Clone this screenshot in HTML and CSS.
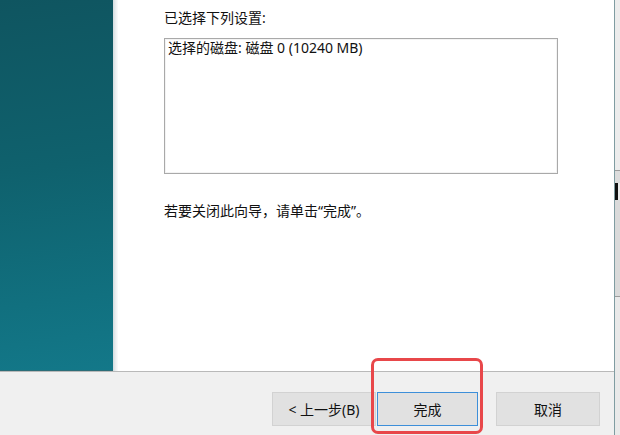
FILE: index.html
```html
<!DOCTYPE html>
<html lang="zh-CN">
<head>
<meta charset="utf-8">
<title>向导</title>
<link rel="stylesheet" href="styles.css">
</head>
<body>
<div class="screen">
  <div class="window">
    <div class="main">
      <div class="sidebar"></div>
      <div class="sidebar-edge"></div>
      <div class="content">
        <div class="label">已选择下列设置:</div>
        <div class="listbox">选择的磁盘: 磁盘 0 (10240 MB)</div>
        <div class="note">若要关闭此向导，请单击“完成”。</div>
      </div>
    </div>
    <div class="footer">
      <div class="btn-pair">
        <button class="btn">&lt; 上一步(B)</button>
        <button class="btn btn-default">完成</button>
      </div>
      <button class="btn">取消</button>
    </div>
  </div>
  <div class="edge"></div>
  <div class="behind">
    <div class="bh-top"></div>
    <div class="bh-line"></div>
    <div class="bh-gap"></div>
    <div class="bh-mark"></div>
    <div class="bh-mid"></div>
    <div class="bh-line"></div>
    <div class="bh-bottom"></div>
  </div>
  <div class="highlight"></div>
</div>
</body>
</html>
```
FILE: styles.css
```css
* { box-sizing: border-box; }
html, body { margin: 0; padding: 0; }
body {
  width: 620px;
  height: 435px;
  overflow: hidden;
  background: #ffffff;
  font-family: "Noto Sans", "Noto Sans CJK SC", sans-serif;
  font-size: 14px;
  color: #111111;
}
.screen {
  position: relative;
  display: flex;
  width: 620px;
  height: 435px;
}
.window {
  flex: 0 0 614px;
  display: flex;
  flex-direction: column;
}
.main {
  display: flex;
  height: 372px;
  border-bottom: 1px solid #b9b9b9;
}
.sidebar {
  flex: 0 0 113px;
  background: linear-gradient(172deg, #0f5560 0%, #0f616d 45%, #11707f 80%, #137889 100%);
  border-bottom: 1px solid #2b6d78;
}
.sidebar-edge {
  flex: 0 0 5px;
  background: linear-gradient(90deg, #d3dcdf 0%, #eef1f2 60%, #fbfbfb 100%);
}
.content {
  flex: 1;
  background: #ffffff;
  padding: 9px 0 0 46px;
  display: flex;
  flex-direction: column;
}
.label {
  line-height: 18px;
}
.listbox {
  margin-top: 11px;
  width: 394px;
  height: 136px;
  border: 1px solid #a9a9a9;
  box-shadow: inset 0 0 0 1px #f3f3f3;
  padding: 0 3px;
  line-height: 18px;
}
.note {
  margin-top: 28px;
  line-height: 18px;
}
.footer {
  flex: 1;
  background: #f0f0f0;
  display: flex;
  align-items: flex-start;
  justify-content: flex-end;
  gap: 18px;
  padding: 20px 14px 0 0;
}
.btn-pair {
  display: flex;
  gap: 1px;
}
.btn {
  width: 104px;
  height: 34px;
  margin: 0;
  padding: 0;
  background: #e1e1e1;
  border: 1px solid #d2d2d2;
  font-family: "Noto Sans", "Noto Sans CJK SC", sans-serif;
  font-size: 14px;
  color: #111111;
}
.btn-default {
  width: 101px;
  border: 1px solid #3d8fd9;
}
.edge {
  flex: 0 0 1px;
  background: #7f9ca1;
}
.behind {
  flex: 1;
  display: flex;
  flex-direction: column;
  background: #ebebeb;
}
.bh-top { height: 170px; background: #ececec; }
.bh-line { height: 1px; background: #9c9c9c; }
.bh-gap { height: 12px; background: #dcdcdc; }
.bh-mark { height: 17px; width: 3px; background: #111; }
.bh-mid { height: 96px; background: #dadada; }
.bh-bottom { flex: 1; background: #e9e9e9; }
.highlight {
  position: absolute;
  left: 371px;
  top: 358px;
  width: 112px;
  height: 76px;
  border: 3.5px solid #e8474a;
  border-radius: 7px;
}
```
